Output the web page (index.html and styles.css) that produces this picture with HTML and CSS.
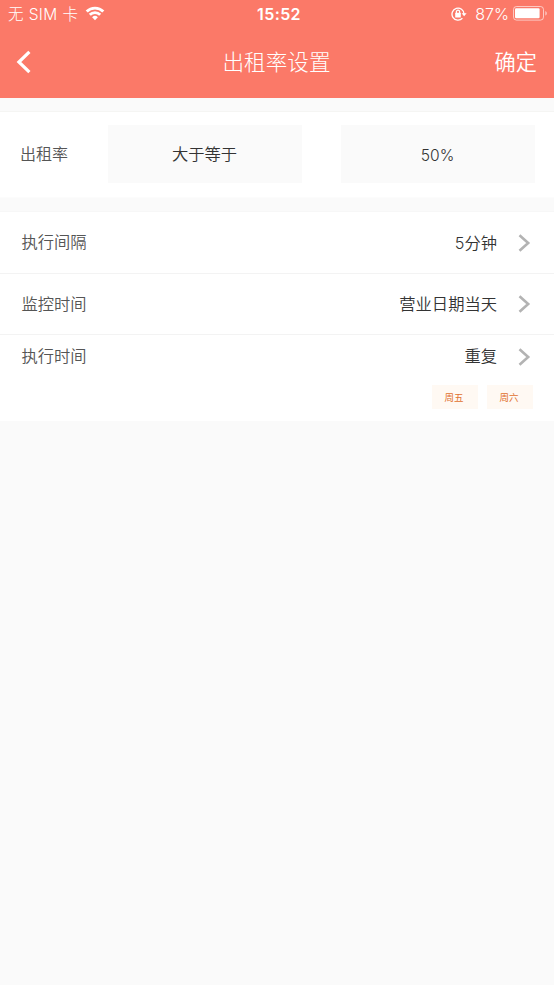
FILE: index.html
```html
<!DOCTYPE html>
<html lang="zh-CN">
<head>
<meta charset="utf-8">
<meta name="viewport" content="width=device-width, initial-scale=1">
<title>出租率设置</title>
<link rel="stylesheet" href="styles.css">
</head>
<body>
<header class="header">
  <div class="status">
    <div class="status-left">
      <span class="carrier">无 SIM 卡</span>
      <svg class="wifi" width="20" height="15" viewBox="0 0 20 15" fill="none" stroke="#fff" stroke-width="2.9">
        <path d="M1.7 5.5a11.8 11.8 0 0 1 16.6 0"/>
        <path d="M4.8 8.8a7.4 7.4 0 0 1 10.4 0"/>
        <path d="M10 14.2 7.1 11.3a4.1 4.1 0 0 1 5.8 0z" fill="#fff" stroke="none"/>
      </svg>
    </div>
    <span class="clock">15:52</span>
    <div class="status-right">
      <svg class="lock" width="16" height="14" viewBox="0 0 16 14" fill="none" stroke="#fff" stroke-width="1.3">
        <path d="M11.4 11.2A6 6 0 1 1 13 7"/>
        <path d="M10.6 6.2h5L13.1 9.2z" fill="#fff" stroke="none"/>
        <path d="M5.4 6.3V4.8a1.6 1.6 0 0 1 3.2 0v1.5"/>
        <rect x="4.2" y="5.8" width="5.6" height="4.6" rx=".5" fill="#fff" stroke="none"/>
      </svg>
      <span class="percent">87%</span>
      <svg class="battery" width="35" height="15" viewBox="0 0 35 15">
        <rect x=".5" y=".5" width="30" height="13.6" rx="3" fill="none" stroke="#fff" stroke-opacity=".6"/>
        <rect x="2" y="2.2" width="24.6" height="10" rx="1.2" fill="#fff"/>
        <path d="M32.3 5c2 .8 2 3.8 0 4.6z" fill="#fff" fill-opacity=".6"/>
      </svg>
    </div>
  </div>
  <nav class="nav">
    <svg class="back" width="16" height="24" viewBox="0 0 16 24" fill="none" stroke="#fff" stroke-width="3.2">
      <path d="M13.4 1.8 2.9 12l10.5 10.2"/>
    </svg>
    <h1 class="title">出租率设置</h1>
    <span class="confirm">确定</span>
  </nav>
</header>
<main>
  <section class="rate">
    <span class="rate-label">出租率</span>
    <div class="field">大于等于</div>
    <div class="field field-number">50%</div>
  </section>
  <section class="list">
    <div class="row">
      <span class="label">执行间隔</span>
      <span class="value value-number">5分钟</span>
      <svg class="arrow" width="13" height="18" viewBox="0 0 13 18"><path d="M1.5 1.2 10.2 9l-8.7 7.8"/></svg>
    </div>
    <div class="row">
      <span class="label">监控时间</span>
      <span class="value">营业日期当天</span>
      <svg class="arrow" width="13" height="18" viewBox="0 0 13 18"><path d="M1.5 1.2 10.2 9l-8.7 7.8"/></svg>
    </div>
    <div class="row row-repeat">
      <span class="label">执行时间</span>
      <span class="value">重复</span>
      <svg class="arrow" width="13" height="18" viewBox="0 0 13 18"><path d="M1.5 1.2 10.2 9l-8.7 7.8"/></svg>
    </div>
    <div class="tags">
      <span class="tag">周五</span>
      <span class="tag">周六</span>
    </div>
  </section>
</main>
</body>
</html>
```
FILE: styles.css
```css
* {
  box-sizing: border-box;
}

body {
  margin: 0;
  min-height: 100vh;
  background: #fafafa;
  color: #333;
  font-family: Inter, "Noto Sans CJK SC", sans-serif;
  font-size: 16.3px;
  font-weight: 350;
}

.header {
  height: 98px;
  background: #fb7968;
  color: #fff;
}

.status {
  display: grid;
  grid-template-columns: 1fr auto 1fr;
  align-items: center;
  height: 28px;
  padding: 0 7px 0 8px;
  line-height: 26px;
}

.status-left,
.status-right {
  display: flex;
  align-items: center;
}

.status-right {
  justify-content: flex-end;
}

.carrier {
  padding-top: 1px;
  font-size: 15.5px;
  font-weight: 300;
  letter-spacing: 0.4px;
  white-space: pre;
}

.wifi {
  margin: -1px 0 0 7px;
}

.clock {
  padding-left: 3px;
  font-size: 16px;
  font-weight: 600;
  letter-spacing: 0.4px;
}

.lock {
  margin: -1px 8px 0 0;
}

.percent {
  font-size: 16px;
  font-weight: 300;
}

.battery {
  margin: -2px -1px 0 4px;
}

.nav {
  display: grid;
  grid-template-columns: 1fr auto 1fr;
  align-items: center;
  height: 70px;
  padding: 0 17px 2px 16px;
}

.title {
  margin: 0;
  padding-bottom: 3px;
  font-size: 21.6px;
  font-weight: 300;
}

.confirm {
  justify-self: end;
  padding-bottom: 3px;
  font-size: 21.2px;
  font-weight: 350;
}

.rate {
  display: grid;
  grid-template-columns: 49px 194px 194px;
  column-gap: 39px;
  height: 87px;
  margin-top: 13px;
  padding: 13px 19px 0 20px;
  border-top: 1px solid #f5f5f3;
  border-bottom: 1px solid #fcfcfc;
  background: #fff;
}

.rate-label,
.label {
  color: #555;
}

.rate-label,
.field {
  display: flex;
  align-items: center;
  height: 58px;
  padding-bottom: 3px;
}

.rate-label {
  font-size: 16px;
}

.field {
  justify-content: center;
  padding-right: 1px;
  background: #fafafa;
}

.field-number {
  padding: 2px 1px 0 0;
  font-size: 15.6px;
}

.list {
  height: 210px;
  margin-top: 13px;
  border-top: 1px solid #f7f7f7;
  background: #fff;
}

.row {
  display: flex;
  align-items: center;
  height: 61px;
  padding: 0 23px 0 21.5px;
}

.row + .row {
  border-top: 1px solid #f3f3f3;
}

.row-repeat {
  height: 45px;
}

.label,
.value {
  padding-bottom: 3px;
}

.row-repeat .label,
.row-repeat .value {
  padding-bottom: 4px;
}

.value {
  margin-left: auto;
}

.value-number {
  padding-bottom: 1px;
}

.arrow {
  margin-left: 21px;
  fill: none;
  stroke: #b3b3b3;
  stroke-width: 2.6;
}

.tags {
  display: flex;
  justify-content: flex-end;
  gap: 9px;
  padding: 6px 21px 0 0;
}

.tag {
  width: 46px;
  height: 24px;
  padding-right: 2px;
  background: #fff9f3;
  color: #e1712f;
  font-size: 9.5px;
  font-weight: 400;
  line-height: 25px;
  text-align: center;
}
```
